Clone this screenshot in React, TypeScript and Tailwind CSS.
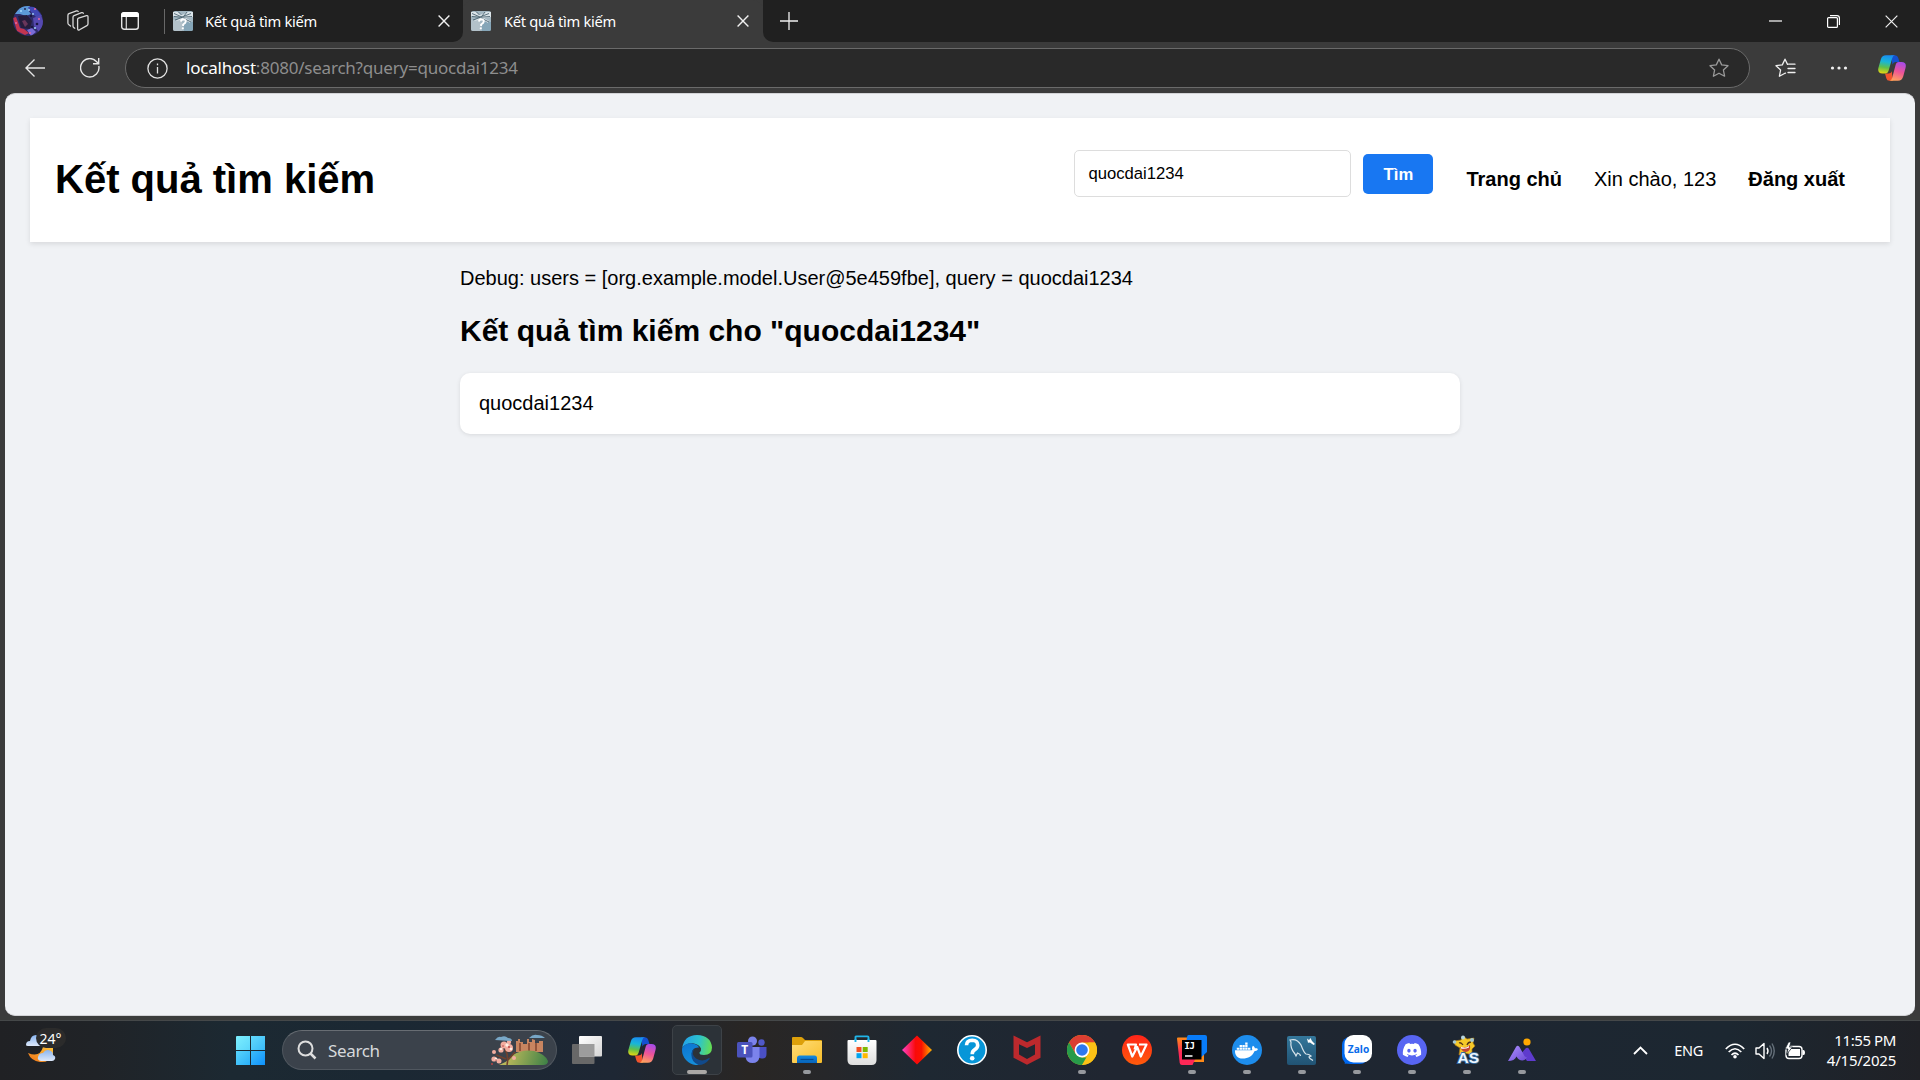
import React from 'react';
import { FaDocker, FaDiscord } from 'react-icons/fa';

const svg = { fill: 'none', xmlns: 'http://www.w3.org/2000/svg' };

function Avatar() {
  return (
    <svg {...svg} width="30" height="30" viewBox="0 0 30 30">
      <defs><clipPath id="av"><circle cx="15" cy="15" r="15" /></clipPath></defs>
      <g clipPath="url(#av)">
        <rect width="30" height="30" fill="#2f2c6b" />
        <path d="M2 8 8 0h9l-2 4 3 4-5 2-6-2z" fill="#5c9ad8" />
        <path d="M15 1h7l7 9-6 1-5-5z" fill="#4148b4" />
        <path d="M20 12l8-3 3 9-5 8-5-6z" fill="#5649b0" />
        <path d="M5 10l9-1 5 6-2 8-9-1z" fill="#261d3c" />
        <path d="M0 12l3-1 2 5 2 6 4 1 5 4-4 2-8-4z" fill="#c23550" />
        <path d="M9 15l3-1 3 4-3 3z" fill="#69365a" />
        <path d="M14 24l5-2 4 4-5 4z" fill="#7a6cd8" />
        <g fill="#e667a8"><circle cx="22" cy="3" r="1" /><circle cx="26" cy="13" r="1" /><circle cx="17" cy="27" r="1" /><circle cx="3" cy="17" r="1" /></g>
        <g fill="#a6d8ff"><circle cx="8" cy="5" r="1" /><circle cx="16" cy="4" r="1" /><circle cx="20" cy="8" r=".9" /><circle cx="22" cy="22" r="1" /></g>
        <g fill="#1b1740"><circle cx="18" cy="10" r="1.200" /><circle cx="24" cy="18" r="1.300" /><circle cx="19" cy="21" r="1.200" /><circle cx="12" cy="3" r=".9" /></g>
      </g>
    </svg>
  );
}

function Workspaces() {
  return (
    <svg {...svg} width="22" height="22" viewBox="0 0 22 22" stroke="#d8d8d8" strokeWidth="1.3" strokeLinejoin="round" strokeLinecap="round">
      <path d="M11.500 8.200 19.500 5.600q1.500-.3 1.500 1.200v7q0 1.300-1.100 1.800l-7.400 4.200q-1.900.8-1.900-1.200V9.500q0-1 .9-1.300z" />
      <path d="M7.800 18.200l-1-.6q-.8-.5-.8-1.500V7.200q0-1.200 1.100-1.600l7.500-2.900q1.300-.3 1.700.6" />
      <path d="M3.500 16l-1.600-1.200q-1-.6-1-1.700V5.400q0-1.300 1.100-1.700L9.500.9q1.200-.3 1.700.6" />
    </svg>
  );
}

function TabActions() {
  return (
    <svg {...svg} width="18" height="18" viewBox="0 0 18 18">
      <rect x=".7" y=".7" width="16.600" height="16.600" rx="2.500" stroke="#e4e4e4" strokeWidth="1.400" />
      <path d="M0 5V3q0-3 3-3h12q3 0 3 3v2z" fill="#fff" />
      <path d="M5.300 5v12" stroke="#d8d8d8" strokeWidth="1.200" />
    </svg>
  );
}

function Favicon() {
  return (
    <svg {...svg} width="20" height="20" viewBox="0 0 20 20">
      <rect width="20" height="20" rx="2" fill="#a3b7c2" />
      <path d="M0 9h9v11H2q-2 0-2-2z" fill="#b3c1c9" />
      <path d="M11 11h9v7q0 2-2 2h-7z" fill="#86a6b8" />
      <path d="M0 1l5 0 4 3 6-3h5v5l-7 1 5 3-1 2-6-4-8 2 5-4-8-1z" fill="#dbe4e9" />
      <path d="M1 2.500 9 6 18 2.500M10 7l8 4M9 6.500 2 9M5 .5 8.500 4M14 1l-3 4M1 5.500l8 .8 10-.8" stroke="#3a5462" strokeWidth=".8" />
      <path d="M7.800 10.500q.7-2.300 2.700-2.300 2.500.3 2.200 2.600-.3 1.500-2.600 2.700v1.500" stroke="#fff" strokeWidth="1.900" />
      <circle cx="9.800" cy="17.300" r="1.100" fill="#fff" />
    </svg>
  );
}

function Cross({ size, w = 1.3 }: { size: number; w?: number }) {
  return (
    <svg {...svg} width={size} height={size} viewBox="0 0 12 12" stroke="#f0f0f0" strokeWidth={w}><path d="M.6.6l10.800 10.800M11.400.6.6 11.400" /></svg>
  );
}

const starPath = 'M10 1.200l2.700 5.700 6.300.8-4.600 4.300 1.200 6.200L10 15.200l-5.600 3L5.600 12 1 7.700l6.300-.8z';

function Copilot() {
  return (
    <svg {...svg} width="28" height="26" viewBox="0 0 28 26">
      <defs>
        <linearGradient id="cpA" x1="8" y1="0" x2="5" y2="19" gradientUnits="userSpaceOnUse"><stop stopColor="#1a8cf0" /><stop offset=".35" stopColor="#18b6d8" /><stop offset=".65" stopColor="#5fc04b" /><stop offset="1" stopColor="#f3d80c" /></linearGradient>
        <linearGradient id="cpB" x1="23" y1="7" x2="17" y2="26" gradientUnits="userSpaceOnUse"><stop stopColor="#a64bea" /><stop offset=".5" stopColor="#ee5497" /><stop offset="1" stopColor="#ffa45c" /></linearGradient>
      </defs>
      <path d="M13 .3h4q2.500 0 3.200 2.500L21.500 7h-4q-2.200 0-3 2.500z" fill="#1450cf" />
      <path d="M15 25.700h-3.500q-2.600 0-3.200-2.500L7 18.500h3.500q2.500 0 3.200-2.300z" fill="#f2542d" />
      <path d="M8 .3h9q-2 .2-2.800 3L10.500 16q-.8 2.500-3.300 2.500H4.500q-5.500 0-4-6L2.800 4.500Q4 .3 8 .3z" fill="url(#cpA)" />
      <path d="M20 25.700h-8.500q2-.3 2.700-3L17.600 10q.7-3 3.200-3h2.700q5.500 0 4 6l-2.300 8.500q-1.200 4.200-5.200 4.200z" fill="url(#cpB)" />
    </svg>
  );
}

function Tab({ active }: { active?: boolean }) {
  return (
    <div className={active ? 'flex h-[42px] w-[300px] items-center rounded-t-[10px] bg-[#3b3b3b] pl-2' : 'flex h-[42px] w-[299px] items-center pl-2'}>
      <Favicon />
      <span className={active ? 'ml-[13px] grow' : 'ml-3 grow'}><span className="text-[14.7px] tracking-[-0.32px] text-white">Kết quả tìm kiếm</span></span>
      <span className={active ? 'mr-[14px]' : 'mr-[13px]'}><Cross size={12} w={1.4} /></span>
    </div>
  );
}

function BrowserChrome() {
  return (
    <div className="h-[93px] bg-[#3b3b3b] font-['Noto_Sans',sans-serif]">
      <div className="flex h-[43px]">
        <div className="flex h-[42px] w-[463px] items-center rounded-br-[10px] bg-[#202020]">
          <span className="ml-[13px]"><Avatar /></span>
          <span className="ml-6"><Workspaces /></span>
          <span className="ml-8"><TabActions /></span>
          <span className="ml-[25px] h-[25px] w-px bg-[#686868]" />
          <Tab />
        </div>
        <Tab active />
        <div className="flex h-[42px] grow items-center rounded-bl-[10px] bg-[#202020]">
          <svg {...svg} className="ml-[17px]" width="18" height="18" stroke="#f0f0f0" strokeWidth="1.300"><path d="M9 0v18M0 9h18" /></svg>
          <svg {...svg} className="ml-auto" width="13" height="13"><path d="M0 6h13" stroke="#fff" strokeWidth="1.200" /></svg>
          <svg {...svg} className="ml-[45px]" width="13" height="13" stroke="#fff" strokeWidth="1.200"><rect x=".6" y="2.600" width="9.800" height="9.800" rx="1" /><path d="M3 .6h7q2.400 0 2.400 2.400v7" /></svg>
          <span className="mr-[22px] ml-[45px]"><Cross size={13} w={1.1} /></span>
        </div>
      </div>
      <div className="flex h-[50px] items-center">
        <svg {...svg} className="ml-[25px]" width="20" height="18" stroke="#e6e6e6" strokeWidth="1.400"><path d="M20 9H1M9.500.6 1 9l8.500 8.400" /></svg>
        <svg {...svg} className="ml-[35px]" width="20" height="20" stroke="#e6e6e6" strokeWidth="1.400"><path d="M18.800 8A9.200 9.200 0 1 1 16.400 3.400L18.500 5.500M18.700 0v5.700H13" /></svg>
        <div className="ml-[25px] flex h-10 w-[1625px] items-center rounded-full border border-[#6a6a6a] bg-[#292929]">
          <svg {...svg} className="ml-[21px]" width="21" height="21" stroke="#e2e2e2" strokeWidth="1.300"><circle cx="10.500" cy="10.500" r="9.600" /><path d="M10.500 9v6.500M10.500 5.500v1.800" /></svg>
          <span className="ml-[18px] text-[17px] tracking-[-0.22px] text-[#8e8e8e]"><span className="text-white">localhost</span>:8080/search?query=quocdai1234</span>
          <svg {...svg} className="mr-5 ml-auto" width="20" height="20" stroke="#9a9a9a" strokeWidth="1.300" strokeLinejoin="round"><path d={starPath} /></svg>
        </div>
        <svg {...svg} className="ml-[25px]" width="21" height="20" stroke="#f0f0f0" strokeWidth="1.300" strokeLinejoin="round" strokeLinecap="round"><path d="M10.500 15.200 10 15.200l-5.600 3L5.600 12 1 7.700l6.300-.8L10 1.200l2.500 5.200M13.500 6.200h6.500M13 10.500h7M13 14.500h7" /></svg>
        <svg {...svg} className="ml-[34px]" width="18" height="4"><g fill="#f0f0f0"><circle cx="2.500" cy="2" r="1.600" /><circle cx="9" cy="2" r="1.600" /><circle cx="15.500" cy="2" r="1.600" /></g></svg>
        <span className="ml-[30px]"><Copilot /></span>
      </div>
    </div>
  );
}

function PageHeader() {
  return (
    <header className="flex h-[124px] items-center justify-between bg-white pr-[45px] pl-[25px] shadow-[0_2px_5px_rgba(0,0,0,0.1)]">
      <h1 className="mb-0.5 text-[40px] leading-[46px] font-bold">Kết quả tìm kiếm</h1>
      <div className="flex items-center">
        <form className="mb-3.5 flex items-center" onSubmit={(e) => e.preventDefault()}>
          <input className="h-[47px] w-[277px] rounded-[5px] border border-[#ddd] px-[13px] pt-0.5 text-[16.67px] outline-none" defaultValue="quocdai1234" />
          <button className="mt-0.5 ml-3 h-10 w-[70px] rounded-[5px] bg-[#1877f2] text-[16.67px] font-bold text-white">Tìm</button>
        </form>
        <nav className="mb-0.5 ml-[33px] flex items-center gap-8 text-[20px] leading-[23px] whitespace-nowrap">
          <a className="font-bold">Trang chủ</a>
          <span>Xin chào, 123</span>
          <a className="font-bold">Đăng xuất</a>
        </nav>
      </div>
    </header>
  );
}

function Weather() {
  return (
    <div className="relative mt-[13px] ml-[25px] h-[36px] w-[42px]">
      <svg {...svg} width="42" height="36" viewBox="0 0 42 36">
        <defs><linearGradient id="cl" x1="0" y1="0" x2="0" y2="1"><stop stopColor="#88b4f0" /><stop offset="1" stopColor="#dde8fa" /></linearGradient><linearGradient id="mo" x1="1" y1="0" x2="0" y2="1"><stop stopColor="#ffc43a" /><stop offset="1" stopColor="#ef7217" /></linearGradient></defs>
        <path d="M1 11q0-4 4-4 1-6 6-6 5 1 6 11H3q-2 0-2-1z" fill="url(#cl)" />
        <path d="M3 19q12 5 15-6h10v8q-4 8-13 7Q6 27 3 19z" fill="url(#mo)" />
        <path d="M13 23q1-4 5-4 3-5 8-2 2 1 2 4 3 1 2 4-1 2-3 2H16q-4-1-3-4z" fill="url(#cl)" />
      </svg>
      <span className="absolute -top-[6px] left-[11px] flex h-5 w-[30px] items-center justify-center rounded-full bg-[#2b2b2b] pr-px text-[14px] text-white">24°</span>
    </div>
  );
}

function SearchArt() {
  return (
    <svg {...svg} width="60" height="32" viewBox="0 0 60 32">
      <defs><linearGradient id="hill" x1="20" y1="18" x2="58" y2="30" gradientUnits="userSpaceOnUse"><stop stopColor="#b7b75a" /><stop offset="1" stopColor="#3c8046" /></linearGradient></defs>
      <path d="M26 18V7h2V5h2v3h3v2h4V5h2v3h3V5l3 1v3h4V7h4v11z" fill="#c88560" />
      <path d="M30 9v8M39 9v8M46 9v8" stroke="#81462f" strokeWidth="1.500" />
      <path d="M9 31Q18 28 23 21q9-6 21-4 11 3 14 10 0 4-5 4z" fill="url(#hill)" />
      <path d="M17 31q2-9-2-16M18 26l7-8M16 25 6 21" stroke="#70402e" strokeWidth="1.600" />
      <g fill="#f3ad9f"><circle cx="14" cy="11" r="3.500" /><circle cx="19" cy="14" r="4" /><circle cx="11" cy="16" r="2.600" /><circle cx="4" cy="18" r="2" /><circle cx="4" cy="25" r="2.600" /><circle cx="9" cy="27" r="2.500" /><circle cx="24" cy="24" r="2" /><circle cx="19" cy="8" r="2.200" /></g>
      <g fill="#fff0e5"><circle cx="17" cy="11" r="1.700" /><circle cx="11" cy="15" r="1.200" /><circle cx="6" cy="25" r="1.500" /><circle cx="21" cy="15" r="1.300" /></g>
      <g fill="#b94443"><circle cx="19" cy="13" r="1" /><circle cx="13" cy="12" r=".8" /><circle cx="6" cy="26" r=".8" /><circle cx="2" cy="30" r="1" /></g>
      <path d="M5 6q3-4 6-3 4-2 7 1 4 0 4 3zM39 4q4-4 8-3 5 0 8 3z" fill="#78a7c7" />
    </svg>
  );
}

function TaskView() {
  return (
    <svg {...svg} width="30" height="30" viewBox="0 0 30 30">
      <defs><linearGradient id="tv" x1="0" y1="0" x2="1" y2="1"><stop stopColor="#fff" /><stop offset="1" stopColor="#d4d4d4" /></linearGradient></defs>
      <rect x="0" y="9" width="22.500" height="20" rx="1" fill="#686868" /><rect x="7" y="1" width="23" height="20.500" rx="1" fill="url(#tv)" /><path d="M7 9h15.500v12.500H7z" fill="#9c9c9c" />
    </svg>
  );
}

function Edge() {
  return (
    <svg {...svg} width="30" height="30" viewBox="0 0 30 30">
      <defs>
        <linearGradient id="eg" x1="3" y1="8" x2="29" y2="13" gradientUnits="userSpaceOnUse"><stop stopColor="#25a6e4" /><stop offset=".5" stopColor="#2cc3cf" /><stop offset="1" stopColor="#63de55" /></linearGradient>
        <linearGradient id="eb" x1="5" y1="8" x2="12" y2="30" gradientUnits="userSpaceOnUse"><stop stopColor="#0c76d2" /><stop offset="1" stopColor="#1590dc" /></linearGradient>
      </defs>
      <path d="M.2 13Q2 .2 15 0q14 .5 15 12.500 0 7.500-8 7.500-5 0-4.500-2.500 2-1.500 1.500-4Q17 9 11 8.200 3 8 .2 13z" fill="url(#eg)" />
      <path d="M.2 13Q4 7 11 8.500q5 1 6 4-7-.5-7.200 6Q10 25 18 29.600 10 31.500 4 25-.8 19.500.2 13z" fill="url(#eb)" />
      <path d="M12.500 13.500q-4 5.500 1.500 10 7 4 13-.5 1-.3.600 1-4.600 6-11 6Q9.500 27 9.400 20q0-5 3.100-6.500z" fill="#114a8b" />
    </svg>
  );
}

function Teams() {
  return (
    <svg {...svg} width="30" height="28" viewBox="0 0 30 28">
      <circle cx="24.500" cy="6.500" r="3.200" fill="#5059c9" /><path d="M20 11h9.500v7q0 5-5 4.500l-4.500-1z" fill="#4a50c4" />
      <circle cx="15.500" cy="5" r="4.500" fill="#7b83eb" /><path d="M8 11h14.500v10q-1 6-7 6T8.500 21z" fill="#7b83eb" />
      <rect y="6" width="15.500" height="15.500" rx="1.500" fill="#4b53bc" /><text x="7.700" y="18" textAnchor="middle" fill="#fff" fontFamily="Open Sans" fontSize="12" fontWeight="700">T</text>
    </svg>
  );
}

function Explorer() {
  return (
    <svg {...svg} width="30" height="28" viewBox="0 0 30 28">
      <defs><linearGradient id="fo" x1="0" y1="0" x2="1" y2="1"><stop stopColor="#ffdd78" /><stop offset="1" stopColor="#f8bd29" /></linearGradient><linearGradient id="fb" x1="0" y1="0" x2="0" y2="1"><stop stopColor="#148be0" /><stop offset="1" stopColor="#0763ba" /></linearGradient></defs>
      <path d="M0 2Q0 1 1 1h8q1 0 2 1l2 2h16q1 0 1 1v5H0z" fill="#dda00a" /><path d="M0 9h10l3-4h17v21q0 1-1 1H1q-1 0-1-1z" fill="url(#fo)" />
      <path d="M5 27v-5q0-2.500 2.500-2.500h15Q25 19.500 25 22v5z" fill="url(#fb)" /><path d="M8.500 23.500h13" stroke="#064a91" strokeWidth="1.200" />
    </svg>
  );
}

function Store() {
  return (
    <svg {...svg} width="30" height="30" viewBox="0 0 30 30">
      <path d="M8.500 7V2.200q0-.8 1-.8h11q1 0 1 .8V7" stroke="#20b5e8" strokeWidth="1.900" /><defs><linearGradient id="st" x1="0" y1="0" x2="0" y2="1"><stop stopColor="#fff" /><stop offset="1" stopColor="#dedede" /></linearGradient></defs>
      <path d="M.5 6q0-1 1-1h27q1 0 1 1v19q0 5-5 5h-19q-5 0-5-5z" fill="url(#st)" /><path d="M8.500 7V4M21.500 7V4" stroke="#20b5e8" strokeWidth="1.900" />
      <path d="M9.500 12h5v5h-5z" fill="#f25022" /><path d="M15.700 12h5v5h-5z" fill="#7fba00" /><path d="M9.500 18.200h5v5h-5z" fill="#00a4ef" /><path d="M15.700 18.200h5v5h-5z" fill="#ffb900" />
    </svg>
  );
}

function Diamond() {
  return (
    <svg {...svg} width="30" height="30" viewBox="0 0 30 30"><defs><linearGradient id="di"><stop stopColor="#ff42c8" /><stop offset=".45" stopColor="#f90a0a" /><stop offset=".65" stopColor="#fb1200" /><stop offset="1" stopColor="#ffb500" /></linearGradient></defs><path d="M15 .5 30 15 15 29.500 0 15z" fill="url(#di)" /></svg>
  );
}

function Help() {
  return (
    <svg {...svg} width="30" height="30" viewBox="0 0 30 30"><circle cx="15" cy="15" r="14.200" fill="#0796d8" stroke="#fff" strokeWidth="1.600" /><path d="M9.500 10.300q.2-5 5.700-5 5.500.2 5.500 4.900 0 2.600-2.900 4.400-2.600 1.600-2.600 4.700" stroke="#fff" strokeWidth="3.600" /><circle cx="15.200" cy="23.200" r="2.300" fill="#fff" /></svg>
  );
}

function McAfee() {
  return (
    <svg {...svg} width="28" height="30" viewBox="0 0 28 30"><path d="M.5.500 14 7.200 27.500.5v22.300L14 29.700.5 22.800zM6 9.200v10.300l8 4.500 8-4.500V9.200L14 13z" fill="#bd292d" fillRule="evenodd" /></svg>
  );
}

function Chrome() {
  return (
    <svg {...svg} width="30" height="30" viewBox="0 0 30 30">
      <circle cx="15" cy="15" r="15" fill="#fbbc05" /><path d="M2 7.500A15 15 0 0 1 28 7.500H15L8.500 18.700z" fill="#dc3e32" /><path d="M2 7.500 8.500 18.700 15 22.500h6.500L15 30A15 15 0 0 1 2 7.500z" fill="#279b4a" /><path d="M15 30l6.500-11.200V7.500H28A15 15 0 0 1 15 30z" fill="#fbc116" />
      <circle cx="15" cy="15" r="7.400" fill="#fff" /><circle cx="15" cy="15" r="5.800" fill="#2e78ee" />
    </svg>
  );
}

function Wps() {
  return (
    <svg {...svg} width="30" height="30" viewBox="0 0 30 30"><defs><linearGradient id="wp" x1="0" y1="0" x2="0" y2="1"><stop stopColor="#ff2419" /><stop offset="1" stopColor="#ff5b0a" /></linearGradient></defs><circle cx="15" cy="15" r="15" fill="url(#wp)" /><path d="M12.500 14.500 14 9.500H5.800l4.500 12 4.900-9.500 3.600 9.500L24.500 9.500H17" stroke="#fff" strokeWidth="2.200" strokeLinejoin="round" /></svg>
  );
}

function IntelliJ() {
  return (
    <svg {...svg} width="30" height="30" viewBox="0 0 30 30">
      <defs><linearGradient id="ij" x1="0" y1="0" x2="0" y2="1"><stop stopColor="#ff8b18" /><stop offset=".55" stopColor="#fe2857" /></linearGradient></defs>
      <path d="M15 17h12v10H15z" fill="#ff8a18" /><path d="M0 3.500Q0 2.500 1 2.500h9v20h9L15.500 30H5q-2 0-2.300-2z" fill="url(#ij)" /><path d="M11.500 0H28q2 0 2 2v15l-5.500 5L9 9l1-7q.3-2 1.500-2z" fill="#087cfa" /><path d="M5 5h19.500v19.500H5z" fill="#000" />
      <text x="7.300" y="14.300" fill="#fff" fontFamily="DejaVu Sans Mono" fontSize="9.500" fontWeight="700" letterSpacing="-.7">IJ</text><path d="M8 21h7.500" stroke="#fff" strokeWidth="1.500" />
    </svg>
  );
}

function MySql() {
  return (
    <svg {...svg} width="29" height="29" viewBox="0 0 29 29"><defs><linearGradient id="my" x1="0" y1="0" x2="0" y2="1"><stop stopColor="#34779b" /><stop offset="1" stopColor="#215374" /></linearGradient></defs><rect width="29" height="29" rx="2" fill="url(#my)" /><path d="M7.500 17 9 20l1.500-3q3 1 3 3M8 18Q3 12 4 6l-1-2q7-2 11 5 3 8 5 9 3 0 5 2l-2 1 1 1.500 3 2" stroke="#d8e4eb" strokeWidth="1.200" /><path d="M20 2.500l2 1.500L23.500 2l1.500 3 3 3-1.500 1L23 6.500l-2 .3z" fill="#fff" /></svg>
  );
}

function Zalo() {
  return (
    <svg {...svg} width="30" height="30" viewBox="0 0 30 30"><rect x="0" y="2" width="26" height="27" rx="8" fill="#0068f0" /><path d="M3 25l-.3 3.800L9 28z" fill="#0068f0" /><rect x="2.500" y="0" width="27.500" height="27.500" rx="9" fill="#fff" /><text x="16.500" y="17.500" textAnchor="middle" fill="#086bea" fontFamily="Open Sans" fontSize="10.200" fontWeight="700">Zalo</text></svg>
  );
}

function AppStar() {
  return (
    <svg {...svg} width="30" height="30" viewBox="0 0 30 30"><path d="M2 6l7-1 2-4 4 3 7-1-1 5 2 3-3 3v6l-7-2-6 2 1-7-5-3z" fill="#f5c928" stroke="#a47416" strokeWidth=".7" /><path d="M7 8q2-1 4 2M19 7q-3 0-4 3" stroke="#513318" strokeWidth="1.300" /><path d="M8 12q5 2 10-2 1 6-4 7-4 0-6-5z" fill="#c44335" /><path d="M9 12q5 2 8-1v1.500q-4 2-8 1z" fill="#fff" /><circle cx="11" cy="2.500" r="2" fill="#b6d5df" /><circle cx="20" cy="5" r="2" fill="#a5c9d2" /><circle cx="2.500" cy="7" r="1.800" fill="#a5c9d2" /><text x="5.500" y="27.500" fill="#edf6ff" stroke="#35699c" strokeWidth="1.800" paintOrder="stroke" fontFamily="Liberation Sans" fontSize="15.500" fontWeight="700">AS</text></svg>
  );
}

function Mountains() {
  return (
    <svg {...svg} width="30" height="24" viewBox="0 0 30 24"><defs><linearGradient id="mt" x1="0" y1="0" x2="1" y2="1"><stop stopColor="#ad91ff" /><stop offset="1" stopColor="#6a48d4" /></linearGradient></defs><path d="M11 19l8-9q2-1 3 1l7 12h-9l-3-4q-3 4-6 0z" fill="#5e3bcd" /><path d="M1 23L9 9q1.500-2.500 3.500 0l5 9q1.500 2 3 .5-2 4-5 4-4 0-6-4-2 4.500-8.500 4.500z" fill="url(#mt)" /><circle cx="20" cy="4" r="3.600" fill="#ffa800" /></svg>
  );
}

function Round({ bg, children }: { bg: string; children: React.ReactNode }) {
  return <div className={`flex size-[30px] items-center justify-center rounded-full text-white ${bg}`}>{children}</div>;
}

const apps: { icon: React.ReactNode; run?: boolean; active?: boolean }[] = [
  { icon: <TaskView /> },
  { icon: <Copilot /> },
  { icon: <Edge />, run: true, active: true },
  { icon: <Teams /> },
  { icon: <Explorer />, run: true },
  { icon: <Store /> },
  { icon: <Diamond /> },
  { icon: <Help /> },
  { icon: <McAfee /> },
  { icon: <Chrome />, run: true },
  { icon: <Wps /> },
  { icon: <IntelliJ />, run: true },
  { icon: <Round bg="bg-[#1d8ded]"><FaDocker size={23} /></Round>, run: true },
  { icon: <MySql />, run: true },
  { icon: <Zalo />, run: true },
  { icon: <Round bg="bg-[#5865f2]"><FaDiscord size={20} /></Round>, run: true },
  { icon: <AppStar />, run: true },
  { icon: <Mountains />, run: true },
];

function Taskbar() {
  return (
    <div className="flex h-[60px] border-t border-[#454849] bg-[linear-gradient(90deg,#202124_0%,#202327_5%,#1c2932_12%,#1b2833_20%,#1e2734_32%,#292624_39%,#26272a_43%,#1e2832_48%,#202631_58%,#1e2631_75%,#1c2731_90%,#202126_100%)] font-['Noto_Sans',sans-serif]">
      <Weather />
      <div className="mt-[15px] ml-[169px] grid h-[29px] w-[29px] grid-cols-2 gap-px">
        <span className="rounded-tl-[1px] bg-linear-to-br from-[#7ceffe] to-[#5bd6fb]" /><span className="bg-linear-to-br from-[#62d9fc] to-[#38baf8]" />
        <span className="bg-linear-to-br from-[#57d4fc] to-[#29aff8]" /><span className="bg-linear-to-br from-[#3bbcf9] to-[#0d91fc]" />
      </div>
      <div className="mt-[9px] ml-[17px] flex h-10 w-[275px] items-center rounded-full border border-[#50575f] border-t-[#686d73] bg-[#3b424b]">
        <svg {...svg} className="ml-3.5" width="20" height="20" stroke="#dedede" strokeWidth="2"><circle cx="8.500" cy="8.500" r="7" /><path d="M13.500 13.500l5 5" strokeWidth="2.500" /></svg>
        <span className="ml-[11px] pt-px text-[17px] tracking-[-0.35px] text-[#d7d9dc]">Search</span>
        <span className="mr-[6px] ml-auto"><SearchArt /></span>
      </div>
      <div className="ml-[2px] flex">
        {apps.map((a, i) => (
          <div key={i} className="flex w-[55px] justify-center pt-1">
            <div className={a.active ? 'flex h-[50px] w-[50px] flex-col items-center rounded-[5px] border border-[#3d4247] bg-[#2c3238]' : 'flex h-[50px] w-[50px] flex-col items-center border border-transparent'}>
              <div className="mt-[9px] flex h-[30px] items-center">{a.icon}</div>
              {a.run && <span className={a.active ? 'mt-[5px] h-1 w-5 rounded-full bg-[#aaa8a6]' : 'mt-[5px] h-1 w-2 rounded-full bg-[#96999e]'} />}
            </div>
          </div>
        ))}
      </div>
      <div className="mr-6 ml-auto flex items-center text-white">
        <svg {...svg} width="15" height="9" stroke="#fff" strokeWidth="1.800"><path d="M1 8l6.500-6.500L14 8" /></svg>
        <span className="ml-[26px] text-[14.500px] tracking-[-0.3px]">ENG</span>
        <svg {...svg} className="ml-[22px]" width="20" height="16" stroke="#fff" strokeWidth="1.700"><path d="M.8 6q9.200-9.500 18.400 0M3.700 9q6.300-6.500 12.600 0M6.500 12q3.500-3.500 7 0" /><circle cx="10" cy="13.800" r="1.800" fill="#fff" stroke="none" /></svg>
        <svg {...svg} className="ml-[10px]" width="20" height="18" stroke="#fff" strokeWidth="1.400" strokeLinejoin="round"><path d="M1 6h3l5-4.500v15L4 12H1zM12 6q2 3 0 6" /><path d="M14.500 3.500q4 5.500 0 11M17 1.500q4.500 7.500 0 15" stroke="#65707a" /></svg>
        <svg {...svg} className="ml-[10px]" width="20" height="18"><rect x="1" y="4.500" width="16" height="12" rx="3" stroke="#fff" strokeWidth="1.400" /><path d="M3.500 7H15v7H3.500z" fill="#fff" /><path d="M17.500 8h1q1.500 0 1.500 2.500T18.500 13h-1z" fill="#fff" /><path d="M3.500 0 0 7h3l-1.500 5.500L7.500 5h-3L6 0z" fill="#fff" stroke="#1d2730" strokeWidth=".8" /></svg>
        <div className="w-[91px] text-right text-[15px] leading-5 tracking-[-0.23px] whitespace-nowrap"><div className="-mt-0.5 tracking-[-0.4px]">11:55 PM</div><div>4/15/2025</div></div>
      </div>
    </div>
  );
}

export default function App() {
  return (
    <div className="flex h-[1080px] w-[1920px] flex-col overflow-hidden bg-[#3b3b3b]">
      <BrowserChrome />
      <main className="mr-[5px] ml-[5px] h-[923px] rounded-[10px] border-y border-[#d2d3d6] bg-[#f0f2f5] px-[25px] pt-6 font-['Liberation_Sans',Arial,sans-serif] text-black">
        <PageHeader />
        <section className="mx-auto w-[1000px] pt-[25px] text-[20px] leading-[23px]">
          <p>Debug: users = [org.example.model.User@5e459fbe], query = quocdai1234</p>
          <h2 className="mt-6 text-[30px] leading-[34px] font-bold">Kết quả tìm kiếm cho "quocdai1234"</h2>
          <div className="mt-[25px] h-[61px] rounded-[10px] bg-white px-[19px] pt-[19px] shadow-[0_1px_4px_rgba(0,0,0,0.1)]">quocdai1234</div>
        </section>
      </main>
      <div className="h-1 shrink-0 bg-[#3b3c3b]" />
      <Taskbar />
    </div>
  );
}
